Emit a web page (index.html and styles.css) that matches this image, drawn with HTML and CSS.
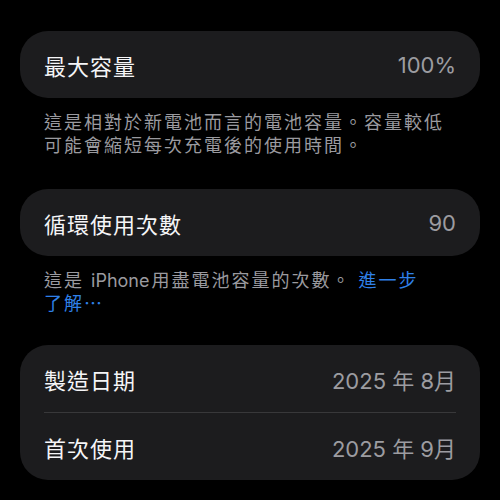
FILE: index.html
```html
<!DOCTYPE html>
<html lang="zh-Hant">
<head>
   <meta charset="UTF-8">
   <meta name="viewport" content="width=device-width, initial-scale=1.0">
   <title>電池健康度</title>

   <link rel="stylesheet" href="styles.css">
</head>
<body>

<div class="group">
	<div class="row">
		<span class="row-title">最大容量</span>
		<span class="row-value">100%</span>
	</div>
</div>
<p class="note">這是相對於新電池而言的電池容量。容量較低<br>可能會縮短每次充電後的使用時間。</p>

<div class="group">
	<div class="row">
		<span class="row-title">循環使用次數</span>
		<span class="row-value">90</span>
	</div>
</div>
<p class="note note-last">這是 <span class="latin">iPhone</span>用盡電池容量的次數。 <a class="link" href="#">進一步<br>了解⋯</a></p>

<div class="group">
	<div class="row">
		<span class="row-title">製造日期</span>
		<span class="row-value">2025 年 8月</span>
	</div>
	<div class="divider"></div>
	<div class="row">
		<span class="row-title">首次使用</span>
		<span class="row-value">2025 年 9月</span>
	</div>
</div>

</body>
</html>
```

FILE: styles.css
```css
*,
::before,
::after {
    padding: 0;
    margin: 0;
    box-sizing: border-box;
}

html,
body {
    height: 100%;
    font-family: Inter, "Noto Sans CJK TC", sans-serif;
    background-color: #000;
}

body {
    padding: 31px 20px 0;
}

/* grouped list */
.group {
    background: #1c1c1e;
    border-radius: 28px;
}

.row {
    display: flex;
    align-items: center;
    justify-content: space-between;
    height: 67px;
    padding: 0 24px;
}

.row-title {
    font-size: 22px;
    letter-spacing: 1px;
    color: #f5f5f7;
}

.row-value {
    font-size: 22px;
    color: #9c9ca1;
}

.divider {
    height: 1px;
    margin: 0 24px;
    background: #38383a;
}

/* footnotes */
.note {
    margin: 13px 0 32px;
    padding: 0 24px;
    font-size: 18px;
    line-height: 23px;
    letter-spacing: 2px;
    color: #9a9a9f;
}

.note-last {
    margin-bottom: 30px;
}

.latin {
    letter-spacing: 0;
    margin-right: 2px;
}

.link {
    color: #2f80e8;
    text-decoration: none;
}
```
